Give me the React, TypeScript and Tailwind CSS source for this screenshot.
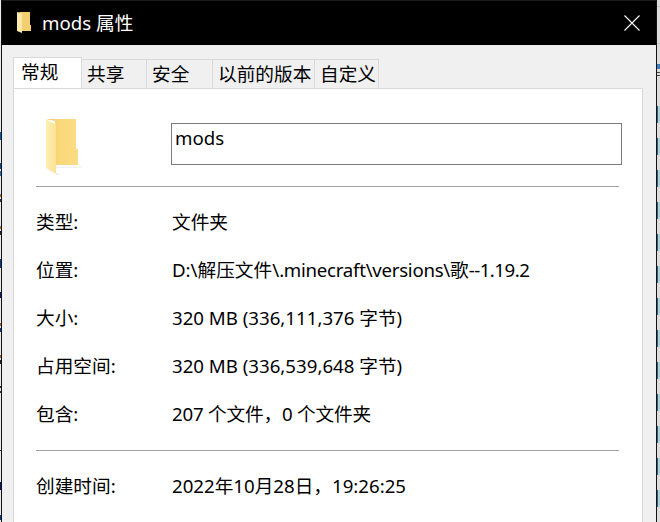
import type { ReactNode } from "react";

const font = { fontFamily: '"Noto Sans", "Noto Sans CJK SC", sans-serif' };

function Row({ label, value, className = "" }: { label: string; value: ReactNode; className?: string }) {
  return (
    <div className={`flex h-[48px] items-center pb-[2px] text-[18.67px] leading-[24px] text-black ${className}`}>
      <div className="w-[136px] shrink-0">{label}</div>
      <div className="whitespace-nowrap">{value}</div>
    </div>
  );
}

function Tab({ label, active, className = "" }: { label: string; active?: boolean; className?: string }) {
  return (
    <div
      className={`flex items-center border-[#d9d9d9] text-[18.67px] leading-[24px] text-black ${
        active
          ? "relative z-10 mt-[-2px] h-[31px] border-t border-r border-l bg-white pb-[2px] pl-[7px]"
          : "h-[29px] border-t border-r bg-[#f0f0f0] pb-[1px] pl-[5px]"
      } ${className}`}
    >
      {label}
    </div>
  );
}

function Folder() {
  return (
    <svg width="36" height="58" viewBox="0 0 36 58" className="block">
      <defs>
        <linearGradient id="b" x1="0" x2="1" y1="0" y2="0">
          <stop offset="0" stopColor="#eec666" />
          <stop offset="0.4" stopColor="#f9d878" />
          <stop offset="1" stopColor="#fcdc84" />
        </linearGradient>
        <linearGradient id="f" x1="0" x2="1" y1="0" y2="0">
          <stop offset="0" stopColor="#ffefb4" />
          <stop offset="1" stopColor="#fbe294" />
        </linearGradient>
      </defs>
      <path d="M1 1 H31 V31 L33 31 V47 H10 V3 Z" fill="url(#b)" />
      <path d="M1 1 L11 7 V56 L1 50 Z" fill="url(#f)" />
      <path d="M11 49 H36 V50 H11 Z M11 55 H14 V57 H11 Z" fill="#efefef" />
    </svg>
  );
}

const leftMarks = [
  [132, 8, "#0a5cb0"], [163, 6, "#0a4a9a"], [171, 5, "#1a70c0"], [194, 3, "#b07020"], [199, 3, "#303050"],
  [226, 3, "#b07020"], [231, 4, "#202040"], [259, 9, "#0a3a90"], [292, 6, "#0a1a70"], [323, 3, "#a06020"],
  [328, 4, "#0a3a90"], [355, 3, "#a06020"], [360, 4, "#202030"], [386, 2, "#303030"], [391, 2, "#303030"],
  [450, 1, "#303030"], [482, 8, "#0a1a60"], [515, 5, "#0a3a90"],
] as const;

export default function App() {
  return (
    <div className="flex h-[522px] w-[660px] overflow-hidden bg-[#dcdcdc]" style={font}>
      <div className="relative w-[1px] shrink-0 bg-[#e8e8e8]">
        {leftMarks.map(([y, h, c]) => (
          <div key={y} className="absolute left-0 w-[1px]" style={{ top: y, height: h, background: c }} />
        ))}
      </div>
      <div className="flex h-[522px] w-[656px] shrink-0 flex-col border-r border-l border-[#111] bg-[#f0f0f0]">
        <div className="flex h-[45px] shrink-0 items-center justify-between border-t border-[#1a1a1a] bg-black pr-[16px] pl-[14px] text-white">
          <div className="flex items-center">
            <svg width="16" height="22" viewBox="0 0 16 22" className="mr-[10px]">
              <path d="M1 0 H14 V13 L15 13 V19 H4 V1 Z" fill="#f3cf70" />
              <path d="M1 0 L6 2 V21 L1 19 Z" fill="#fdeaa8" />
            </svg>
            <span className="text-[18.67px] leading-[24px]">mods 属性</span>
          </div>
          <svg width="16" height="16" viewBox="0 0 16 16" stroke="white" strokeWidth="1.1" fill="none">
            <path d="M0.5 0.5 L15.5 15.5 M15.5 0.5 L0.5 15.5" />
          </svg>
        </div>
        <div className="flex flex-1 flex-col pr-[13px] pl-[11px]">
          <div className="flex h-[43px] shrink-0 items-end pt-[14px]">
            <Tab label="常规" active className="w-[69px]" />
            <Tab label="共享" className="w-[65px]" />
            <Tab label="安全" className="w-[66px]" />
            <Tab label="以前的版本" className="w-[102px]" />
            <Tab label="自定义" className="w-[64px]" />
          </div>
          <div className="flex-1 border border-b-0 border-[#d9d9d9] bg-white pr-[23px] pl-[22px]">
            <div className="flex h-[98px] items-start border-b border-[#a0a0a0]">
              <div className="mt-[29px] ml-[9px] w-[126px] shrink-0">
                <Folder />
              </div>
              <div className="mt-[34px] mr-[-3px] h-[42px] flex-1 border border-[#7a7a7a] pt-[2px] pl-[3px] text-[18.67px] leading-[24px] text-black">
                mods
              </div>
            </div>
            <div className="pt-[12px]">
              <Row label="类型:" value="文件夹" />
              <Row
                label="位置:"
                value={
                  <>
                    D:\解压文件\<span className="tracking-[-0.27px]">.minecraft\versions\</span>歌
                    <span className="tracking-[-0.5px]">--1.19.2</span>
                  </>
                }
              />
              <Row label="大小:" value="320 MB (336,111,376 字节)" />
              <Row label="占用空间:" value="320 MB (336,539,648 字节)" />
              <Row label="包含:" value={<span className="tracking-[-0.2px]">207 个文件，0 个文件夹</span>} />
            </div>
            <div className="mt-[11px] border-t border-[#a0a0a0] pt-[12px]">
              <Row label="创建时间:" value="2022年10月28日，19:26:25" />
            </div>
          </div>
        </div>
      </div>
      <div className="flex flex-1 flex-col">
        <div className="h-[9px] border-b border-[#c4c4c4]" />
        <div className="h-[51px] border-b border-[#c4c4c4]" />
        <div className="mt-[20px] h-[6px] bg-[#3a80c8]" />
        <div className="mt-[3px] h-[1px] bg-[#444]" />
        <div className="mt-[3px] h-[1px] bg-[#444]" />
        <div className="flex flex-col pt-[30px]">
          {Array.from({ length: 13 }, (_, i) => (
            <div key={i} className="mb-[15px] flex h-[17px]">
              <div className="w-[1px] bg-[#3a5a80]" />
              <div className="flex-1 bg-[#a8d4d4]" />
            </div>
          ))}
        </div>
      </div>
    </div>
  );
}
